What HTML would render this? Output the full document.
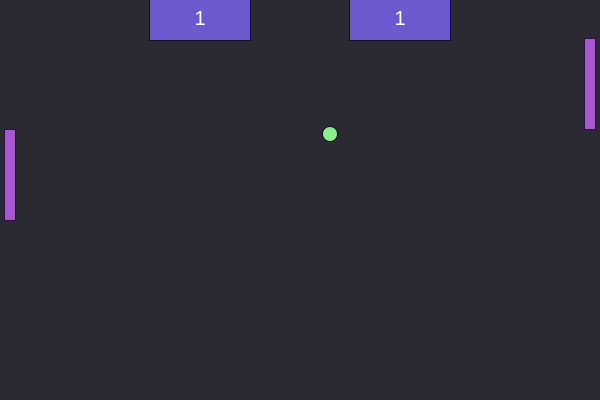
<!DOCTYPE html>
<html><head><style>
html,body{margin:0;padding:0;width:600px;height:400px;overflow:hidden;background:#2a2a35;}
.s{position:absolute;top:-1px;width:100px;height:40px;background:#6a5acd;border:1px solid #111122;color:#fff;font:20px "Liberation Sans",sans-serif;text-align:center;line-height:38px;}
.p{position:absolute;width:10px;height:90px;background:#a855d6;border:1px solid #2a1438;}
.b{position:absolute;left:322px;top:126px;width:14px;height:14px;border-radius:50%;background:#8aee8a;border:1px solid #111811;}
</style></head><body>
<div class="s" style="left:149px">1</div>
<div class="s" style="left:349px">1</div>
<div class="p" style="left:4px;top:129px"></div>
<div class="p" style="left:584px;top:38px"></div>
<div class="b"></div>
</body></html>
